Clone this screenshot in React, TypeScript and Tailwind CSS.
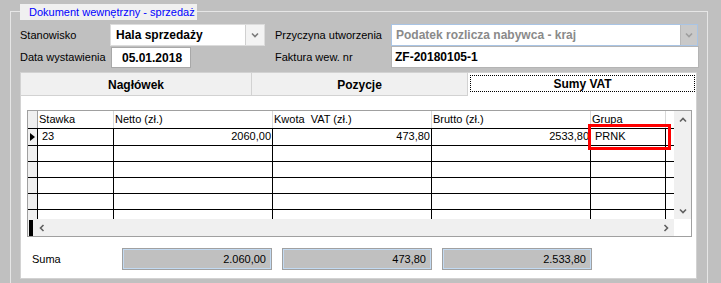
import React from "react";

const Chevron = ({ dir, color = "#606060" }: { dir: "up" | "down" | "left" | "right"; color?: string }) => {
  const paths: Record<string, string> = {
    down: "M1 1.5 L4 4.5 L7 1.5",
    up: "M1 4.5 L4 1.5 L7 4.5",
    left: "M4.5 1 L1.5 4 L4.5 7",
    right: "M1.5 1 L4.5 4 L1.5 7",
  };
  const vertical = dir === "up" || dir === "down";
  return (
    <svg width={vertical ? 8 : 6} height={vertical ? 6 : 8} viewBox={vertical ? "0 0 8 6" : "0 0 6 8"}>
      <path d={paths[dir]} fill="none" stroke={color} strokeWidth="1.6" />
    </svg>
  );
};

const cols = [76, 159, 159, 159, 75];

export default function App() {
  const rows = [
    { ind: true, vals: ["23", "2060,00", "473,80", "2533,80", "PRNK"] },
    { vals: ["", "", "", "", ""] },
    { vals: ["", "", "", "", ""] },
    { vals: ["", "", "", "", ""] },
    { vals: ["", "", "", "", ""] },
    { vals: ["", "", "", "", ""] },
  ];
  const headers = ["Stawka", "Netto (zł.)", "Kwota  VAT (zł.)", "Brutto (zł.)", "Grupa"];
  const align = ["left", "right", "right", "right", "left"];

  return (
    <div className="w-[721px] h-[283px] bg-[#c0c0c0] overflow-hidden font-['Liberation_Sans',Arial,sans-serif] text-[11px] text-black pt-[11px] pl-[10px]">
      <div className="relative w-[698px] h-[280px] border-l border-t border-r border-[#e6e6e6] pl-[9px] pt-[12px]">
        {/* group legend */}
        <div className="absolute left-[9px] top-[-8px] w-[177px] h-[16px] bg-[#f0f0f0] pl-[9px] text-[#0000ff] leading-[16px] whitespace-nowrap">
          Dokument wewnętrzny - sprzedaż
        </div>

        {/* row 1 */}
        <div className="flex items-center h-[22px]">
          <div className="w-[90px]">Stanowisko</div>
          <div className="w-[155px] h-[22px] bg-white border border-[#dcdcdc] flex items-center">
            <div className="flex-1 pl-[5px] font-bold text-[12px] whitespace-nowrap">Hala sprzedaży</div>
            <div className="w-[19px] h-[20px] bg-[#f3f3f3] border-l border-[#d0d0d0] flex items-center justify-center">
              <Chevron dir="down" color="#7a7a7a" />
            </div>
          </div>
          <div className="ml-[10px] w-[116px] whitespace-nowrap">Przyczyna utworzenia</div>
          <div className="w-[307px] h-[22px] bg-white border border-[#a9c4e4] flex items-center">
            <div className="flex-1 pl-[4px] font-bold text-[12px] text-[#8a8a8a] whitespace-nowrap">
              Podatek rozlicza nabywca - kraj
            </div>
            <div className="w-[17px] h-[20px] bg-[#c9c9c9] border-l border-[#b8b8b8] flex items-center justify-center">
              <Chevron dir="down" color="#9e9e9e" />
            </div>
          </div>
        </div>

        {/* row 2 */}
        <div className="flex items-end h-[22px]">
          <div className="w-[90px] self-center">Data wystawienia</div>
          <div className="ml-[1px] w-[80px] h-[21px] bg-white border border-[#a8a8a8] flex items-center pl-[10px] font-bold text-[12px]">
            05.01.2018
          </div>
          <div className="ml-[84px] w-[116px] self-center whitespace-nowrap">Faktura wew. nr</div>
          <div className="w-[308px] h-[22px] bg-white border border-[#b4b4b4] flex items-center pl-[3px] font-bold text-[12px]">
            ZF-20180105-1
          </div>
        </div>

        {/* tabs */}
        <div className="mt-[4px] w-[677px] flex h-[24px]">
          <div className="w-[231px] h-[24px] bg-[#f0f0f0] border-t border-l border-b border-[#d2d2d2] flex items-center justify-center font-bold text-[12px] pt-[1px]">
            Nagłówek
          </div>
          <div className="w-[216px] h-[24px] bg-[#f0f0f0] border-t border-l border-b border-[#d2d2d2] flex items-center justify-center font-bold text-[12px] pt-[1px]">
            Pozycje
          </div>
          <div className="w-[230px] h-[24px] bg-white border-t border-l border-r border-[#d2d2d2] pt-[2px] pl-[2px] pr-[1px] pb-[4px] flex">
            <div className="flex-1 border border-dotted border-black flex items-center justify-center font-bold text-[12px]">
              Sumy VAT
            </div>
          </div>
        </div>

        {/* panel */}
        <div className="w-[677px] h-[183px] bg-white border-l border-r border-b border-[#d2d2d2] pt-[14px] pl-[6px]">
          {/* grid */}
          <div className="relative w-[665px] h-[127px] border border-[#a0a0a0] bg-white flex flex-col">
            <div className="flex h-[108px]">
              <div className="w-[646px] h-[108px] overflow-hidden">
                {/* header */}
                <div className="flex h-[18px] border-b border-black">
                  <div className="w-[10px] bg-[#f0f0f0] border-r border-[#a0a0a0]" />
                  {headers.map((h, i) => (
                    <div
                      key={i}
                      style={{ width: cols[i] }}
                      className="border-r border-[#d8d8d8] pl-[1px] leading-[17px] whitespace-pre"
                    >
                      {h}
                    </div>
                  ))}
                  <div className="flex-1" />
                </div>
                {rows.map((r, ri) => (
                  <div key={ri} className={`flex border-b border-black ${ri === 0 ? "h-[17px]" : "h-[16px]"}`}>
                    <div className="w-[10px] bg-[#f0f0f0] border-r border-black flex items-center pl-[2px]">
                      {r.ind && (
                        <svg width="5" height="8" viewBox="0 0 5 8">
                          <path d="M0 0 L5 4 L0 8 Z" fill="#000" />
                        </svg>
                      )}
                    </div>
                    {r.vals.map((v, i) => (
                      <div
                        key={i}
                        style={{ width: cols[i] }}
                        className={`border-r border-black leading-[15px] text-[11px] whitespace-nowrap ${
                          align[i] === "right" ? "text-right pr-[1px]" : i === 4 ? "pl-[4px]" : "pl-[4px]"
                        }`}
                      >
                        {v}
                      </div>
                    ))}
                    <div className="flex-1" />
                  </div>
                ))}
              </div>
              <div className="w-[17px] h-[108px] bg-[#f0f0f0] flex flex-col justify-between">
                <div className="h-[17px] flex items-center justify-center">
                  <Chevron dir="up" />
                </div>
                <div className="h-[17px] flex items-center justify-center">
                  <Chevron dir="down" />
                </div>
              </div>
            </div>
            <div className="flex h-[17px]">
              <div className="w-[646px] h-[17px] bg-[#f0f0f0] flex items-center">
                <div className="ml-[1px] w-[4px] h-[16px] bg-black" />
                <div className="w-[17px] h-[17px] flex items-center justify-center">
                  <Chevron dir="left" />
                </div>
                <div className="flex-1" />
                <div className="w-[17px] h-[17px] flex items-center justify-center">
                  <Chevron dir="right" />
                </div>
              </div>
              <div className="w-[17px] h-[17px] bg-white" />
            </div>
            {/* red highlight */}
            <div className="absolute left-[560px] top-[13px] w-[83px] h-[26px] border-[3px] border-[#ff0000]" />
          </div>

          {/* suma */}
          <div className="mt-[11px] flex items-center h-[22px]">
            <div className="w-[95px] pl-[5px]">Suma</div>
            <div className="w-[150px] h-[22px] bg-[#c0c0c0] border border-[#a0a0a0] shadow-[inset_0_0_0_1px_#c2daf2] flex items-center justify-end pr-[5px]">
              2.060,00
            </div>
            <div className="ml-[10px] w-[150px] h-[22px] bg-[#c0c0c0] border border-[#a0a0a0] shadow-[inset_0_0_0_1px_#c2daf2] flex items-center justify-end pr-[5px]">
              473,80
            </div>
            <div className="ml-[10px] w-[150px] h-[22px] bg-[#c0c0c0] border border-[#a0a0a0] shadow-[inset_0_0_0_1px_#c2daf2] flex items-center justify-end pr-[5px]">
              2.533,80
            </div>
          </div>
        </div>
      </div>
    </div>
  );
}
